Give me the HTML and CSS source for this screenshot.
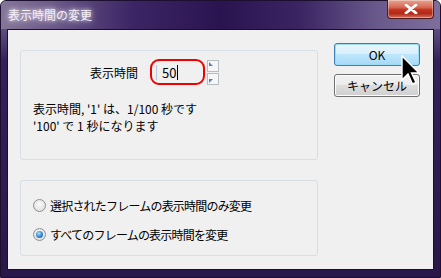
FILE: index.html
```html
<!DOCTYPE html>
<html>
<head>
  <meta charset="UTF-8" />
  <title>表示時間の変更</title>
  <link rel="stylesheet" href="styles.css">
</head>
<body>
  <div class="window">
    <!-- Title bar -->
    <div class="titlebar">
      <span class="title">表示時間の変更</span>
      <button class="close-btn">
        <svg width="14" height="10" viewBox="0 0 14 10">
          <path d="M2 1 L12 9 M12 1 L2 9" stroke="#fff" stroke-width="2.8" stroke-linecap="round"/>
        </svg>
      </button>
    </div>

    <!-- Client area -->
    <div class="client">
      <div class="left-col">
        <div class="group group-time">
          <div class="time-row">
            <span class="time-label">表示時間</span>
            <div class="annot">
              <span class="edit-line"></span>
              <span class="edit-value">50</span><span class="caret"></span>
            </div>
            <div class="spin">
              <span class="spin-up"><svg width="6" height="6" viewBox="0 0 6 6"><path d="M1 1 L1 5 L5 5 Z" fill="#5a7fb0"/></svg></span>
              <span class="spin-down"><svg width="6" height="6" viewBox="0 0 6 6"><path d="M1 5 L1 1 L5 1 Z" fill="#5a7fb0"/></svg></span>
            </div>
          </div>
          <p class="note">表示時間, '1' は、1/100 秒です<br>'100' で 1 秒になります</p>
        </div>

        <div class="group group-radio">
          <label class="radio-row">
            <span class="radio"></span>
            <span class="radio-text">選択されたフレームの表示時間のみ変更</span>
          </label>
          <label class="radio-row">
            <span class="radio checked"></span>
            <span class="radio-text">すべてのフレームの表示時間を変更</span>
          </label>
        </div>
      </div>

      <div class="right-col">
        <button class="btn btn-ok">OK</button>
        <button class="btn btn-cancel">キャンセル</button>
      </div>
    </div>

    <!-- Mouse pointer -->
    <svg class="pointer" width="20" height="32" viewBox="0 0 20 32">
      <path d="M1 1 L1 25 L7 19 L11.5 29 L15 27.5 L10.5 18 L18 18 Z" fill="#000" stroke="#fff" stroke-width="1.4" stroke-linejoin="miter"/>
    </svg>
  </div>
</body>
</html>
```

FILE: styles.css
```css
html, body {
  margin: 0;
  padding: 0;
}
body {
  width: 441px;
  height: 278px;
  overflow: hidden;
  font-family: "Noto Sans CJK JP", "DejaVu Sans", sans-serif;
  font-size: 12px;
  color: #000;
}
.window {
  position: relative;
  width: 441px;
  height: 278px;
  box-sizing: border-box;
  border: 1px solid #1c1030;
  border-radius: 6px 6px 0 0;
  background: linear-gradient(180deg, #6f5f90 0, #5c4b7e 30px, #34215a 60px, #2a1749 100%);
  display: flex;
  flex-direction: column;
}
.titlebar {
  height: 28px;
  display: flex;
  align-items: flex-start;
  justify-content: space-between;
  background: linear-gradient(90deg, #857598 0%, #6a5888 12%, #3c2564 30%, #2a1450 50%, #3a2462 68%, #6a5a8c 86%, #7d6e9c 100%);
  border-radius: 5px 5px 0 0;
}
.title {
  margin: 5px 0 0 7px;
  color: #f2eef8;
  font-size: 12px;
  line-height: 17px;
  text-shadow: 0 0 4px rgba(255,255,255,0.9), 0 0 10px rgba(255,255,255,0.6);
}
.close-btn {
  width: 47px;
  height: 19px;
  margin: -1px 6px 0 0;
  padding: 0;
  border: 1px solid #4a1c22;
  border-top: none;
  border-radius: 0 0 4px 4px;
  background: linear-gradient(180deg, #e7a493 0%, #d66a55 40%, #c0321e 55%, #b22a18 75%, #d4715e 100%);
  box-shadow: inset 0 0 0 1px rgba(255,255,255,0.35);
  display: flex;
  align-items: center;
  justify-content: center;
}
.client {
  margin: 0 6px;
  height: 241px;
  box-sizing: border-box;
  border: 1px solid #1a0e2e;
  background: #f0f0f0;
  display: flex;
  align-items: flex-start;
}
.left-col {
  margin: 20px 0 0 12px;
  display: flex;
  flex-direction: column;
  gap: 20px;
}
.group {
  width: 298px;
  box-sizing: border-box;
  border: 1px solid #d5dfe5;
  border-radius: 3px;
}
.group-time {
  height: 110px;
  padding: 8px 0 0 12px;
}
.time-row {
  display: flex;
  align-items: center;
  height: 26px;
}
.time-label {
  margin-left: 57px;
  width: 60px;
}
.annot {
  width: 55px;
  height: 26px;
  box-sizing: border-box;
  border: 2.5px solid #f00000;
  border-radius: 9px;
  display: flex;
  align-items: center;
  font-size: 13px;
}
.edit-line {
  width: 1px;
  height: 15px;
  background: #b8c8d8;
  margin: 0 5px 0 4px;
}
.caret {
  width: 1px;
  height: 15px;
  background: #000;
  margin-left: 1px;
}
.spin {
  margin-left: 2px;
  display: flex;
  flex-direction: column;
  gap: 1px;
}
.spin-up, .spin-down {
  width: 10px;
  height: 10px;
  border: 1px solid #b4bcc4;
  background: #f4f6f8;
  display: flex;
  align-items: flex-start;
  justify-content: flex-start;
}
.spin-down {
  align-items: flex-end;
}
.note {
  margin: 15px 0 0 0;
  line-height: 17px;
}
.group-radio {
  height: 76px;
  padding: 16px 0 0 12px;
  display: flex;
  flex-direction: column;
  gap: 12px;
}
.radio-row {
  display: flex;
  align-items: center;
  gap: 4px;
  height: 17px;
}
.radio-text {
  letter-spacing: -0.8px;
}
.radio {
  width: 11px;
  height: 11px;
  border-radius: 50%;
  border: 1px solid #8e8f8f;
  background: radial-gradient(circle at 50% 40%, #fbfbfb 0, #e6e6e6 60%, #d4d4d4 100%);
  position: relative;
}
.radio.checked::after {
  content: "";
  position: absolute;
  left: 2px;
  top: 2px;
  width: 7px;
  height: 7px;
  border-radius: 50%;
  background: radial-gradient(circle at 40% 35%, #b6e4ff 0, #3c94d8 45%, #0e4f8e 100%);
}
.right-col {
  margin: 13px 0 0 16px;
  display: flex;
  flex-direction: column;
  gap: 8px;
}
.btn {
  width: 86px;
  height: 23px;
  padding: 0;
  border-radius: 3px;
  font-family: "Noto Sans CJK JP", "DejaVu Sans", sans-serif;
  font-size: 12px;
  color: #000;
}
.btn-ok {
  border: 1px solid #3c7fb1;
  background: linear-gradient(180deg, #eaf6fd 0%, #d9f0fc 45%, #bee6fd 50%, #a7d9f5 100%);
  box-shadow: inset 0 0 0 1px #9cdaf8;
}
.btn-cancel {
  border: 1px solid #707070;
  background: linear-gradient(180deg, #f2f2f2 0%, #ebebeb 45%, #dddddd 50%, #cfcfcf 100%);
  box-shadow: inset 0 0 0 1px #fcfcfc;
}
.pointer {
  position: absolute;
  left: 400px;
  top: 54px;
}
```
